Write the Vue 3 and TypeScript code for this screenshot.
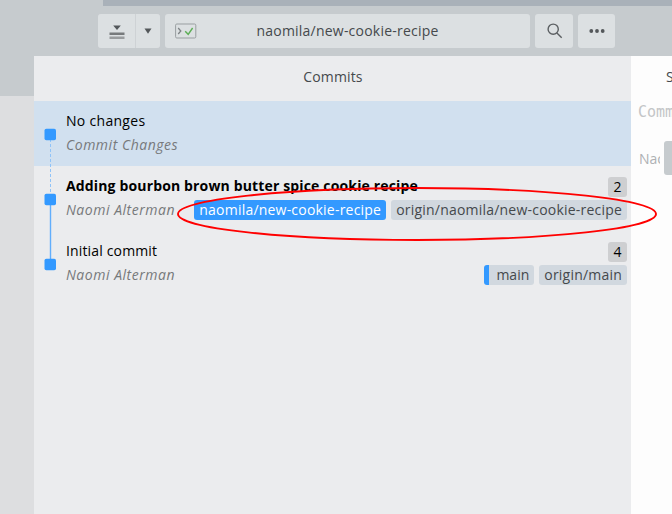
<script setup lang="ts">
interface RefLabel {
  name: string
  kind: 'current' | 'remote' | 'local'
}

interface Commit {
  title: string
  author: string
  selected?: boolean
  bold?: boolean
  files?: number
  refs: RefLabel[]
}

const branch = 'naomila/new-cookie-recipe'

const commits: Commit[] = [
  { title: 'No changes', author: 'Commit Changes', selected: true, refs: [] },
  {
    title: 'Adding bourbon brown butter spice cookie recipe',
    author: 'Naomi Alterman',
    bold: true,
    files: 2,
    refs: [
      { name: branch, kind: 'current' },
      { name: `origin/${branch}`, kind: 'remote' },
    ],
  },
  {
    title: 'Initial commit',
    author: 'Naomi Alterman',
    files: 4,
    refs: [
      { name: 'main', kind: 'local' },
      { name: 'origin/main', kind: 'remote' },
    ],
  },
]
</script>

<template>
  <div class="window">
    <header class="top">
      <div class="tab-strip"></div>
      <div class="toolbar">
        <div class="split">
          <button class="btn stash" aria-label="Stash">
            <svg width="16" height="16" viewBox="0 0 16 16">
              <path d="M4.2 1.5h7.6L8 6z" fill="#53575a" />
              <rect x="0.5" y="8.5" width="15" height="2.5" fill="#777a7c" />
              <rect x="0.5" y="12.5" width="15" height="2.5" fill="#999c9e" />
            </svg>
          </button>
          <button class="btn drop" aria-label="Stash options">
            <svg width="8" height="6" viewBox="0 0 8 6"><path d="M0.5 0.5h7L4 5.7z" fill="#53575a" /></svg>
          </button>
        </div>
        <button class="btn branch">
          <svg class="console" width="22" height="16" viewBox="0 0 22 16" fill="none">
            <rect x="0.6" y="1" width="20.2" height="14" rx="1.2" stroke="#999ea1" />
            <path d="M3.2 5l2.6 3-2.6 3" stroke="#7d8285" stroke-width="1.3" />
            <path d="M10.2 8.3l3 3L17.6 5" stroke="#5cae55" stroke-width="1.4" />
          </svg>
          <span class="branch-name">{{ branch }}</span>
        </button>
        <button class="btn search" aria-label="Search">
          <svg width="18" height="18" viewBox="0 0 18 18" fill="none" stroke="#5b5f62" stroke-width="1.4">
            <circle cx="7.2" cy="7.2" r="5.1" />
            <path d="M10.9 10.9l4.8 4.8" />
          </svg>
        </button>
        <button class="btn more" aria-label="More">
          <svg width="16" height="4" viewBox="0 0 16 4" fill="#53575a">
            <circle cx="2.3" cy="2" r="1.9" />
            <circle cx="8" cy="2" r="1.9" />
            <circle cx="13.7" cy="2" r="1.9" />
          </svg>
        </button>
      </div>
    </header>

    <div class="body">
      <aside class="rail"></aside>

      <main class="commits">
        <h2 class="heading"><span>Commits</span></h2>
        <div class="list">
          <svg class="graph" width="32" height="195" viewBox="0 0 32 195">
            <path d="M16.5 33v65" stroke="#8fc3f8" stroke-dasharray="3 2" />
            <path d="M16.5 98v65" stroke="#61aefc" stroke-width="1.4" />
            <rect
              v-for="(c, i) in commits"
              :key="c.title"
              x="10.5"
              :y="27.8 + i * 65"
              width="11.5"
              height="11.5"
              rx="1.8"
              fill="#3399ff"
            />
          </svg>
          <article v-for="c in commits" :key="c.title" class="row" :class="{ selected: c.selected }">
            <div class="line">
              <span class="title" :class="{ bold: c.bold }">{{ c.title }}</span>
              <span v-if="c.files" class="count">{{ c.files }}</span>
            </div>
            <div class="line second">
              <span class="author">{{ c.author }}</span>
              <span v-if="c.refs.length" class="refs">
                <span v-for="r in c.refs" :key="r.name" class="ref" :class="r.kind">{{ r.name }}</span>
              </span>
            </div>
          </article>
        </div>
      </main>

      <section class="details">
        <div class="tab">S</div>
        <div class="message">Comm</div>
        <div class="signoff">
          <span class="who">Nao</span>
          <span class="commit-btn"></span>
        </div>
      </section>
    </div>

    <svg class="marker" width="484" height="58" viewBox="0 0 484 58" fill="none">
      <ellipse cx="242" cy="29" rx="239" ry="26" stroke="#ff0000" stroke-width="1.9" />
    </svg>
  </div>
</template>

<style>
body {
  margin: 0;
  overflow: hidden;
}
</style>

<style scoped>
.window {
  position: relative;
  display: flex;
  flex-direction: column;
  width: 672px;
  height: 514px;
  overflow: hidden;
  background: #c6cbce;
  color: #000;
  font-family: 'Open Sans', 'Noto Sans', sans-serif;
  font-size: 14px;
}
.top {
  height: 56px;
  flex: none;
}
.tab-strip {
  height: 6px;
  margin-left: 103px;
  background: #a9b1b9;
}
.toolbar {
  display: flex;
  gap: 5px;
  padding: 8px 0 0 98px;
}
.split {
  display: flex;
  gap: 1px;
  border-radius: 3px;
  overflow: hidden;
  background: #ced2d5;
}
.btn {
  display: flex;
  align-items: center;
  justify-content: center;
  height: 34px;
  padding: 0;
  border: 0;
  border-radius: 3px;
  background: #dce0e2;
  color: #45494c;
  font: inherit;
}
.stash {
  width: 37px;
  border-radius: 0;
  padding-top: 1px;
}
.drop {
  width: 24px;
  border-radius: 0;
}
.branch {
  width: 365px;
  justify-content: flex-start;
}
.console {
  margin-left: 10px;
}
.branch-name {
  flex: 1;
  margin-right: 32px;
  padding-bottom: 1px;
  text-align: center;
  letter-spacing: 0.22px;
}
.search {
  width: 38px;
  padding-left: 2px;
}
.more {
  width: 37px;
  padding-bottom: 1px;
}
.body {
  display: flex;
  flex: 1;
}
.rail {
  width: 34px;
  margin-top: 40px;
  background: #dddee0;
}
.commits {
  width: 597px;
  background: #ebecee;
}
.heading {
  height: 45px;
  margin: 0;
  padding-left: 1px;
  line-height: 42px;
  text-align: center;
  letter-spacing: 0.15px;
  color: #45494c;
  font-size: 14px;
  font-weight: 400;
}
.list {
  position: relative;
}
.graph {
  position: absolute;
  top: 0;
  left: 0;
}
.row {
  box-sizing: border-box;
  height: 65px;
  padding: 8px 4px 0 32px;
}
.selected {
  background: #d1e0ef;
}
.line {
  display: flex;
  justify-content: space-between;
  height: 24px;
  line-height: 24px;
  white-space: nowrap;
}
.title {
  letter-spacing: 0.15px;
}
.selected .title {
  letter-spacing: 0.3px;
}
.bold {
  font-weight: 700;
}
.author {
  color: #77797b;
  font-style: italic;
  letter-spacing: 0.52px;
}
.refs {
  display: flex;
  gap: 5px;
  padding-top: 2px;
}
.ref {
  height: 20px;
  line-height: 20px;
  padding: 0 5px;
  border-radius: 3px;
  background: #d1d8df;
  color: #45494c;
  letter-spacing: 0.21px;
}
.ref.current {
  background: #3399ff;
  color: #fff;
}
.ref.local {
  padding-left: 7px;
  border-left: 5px solid #3399ff;
  letter-spacing: 0;
}
.count {
  width: 19px;
  height: 20px;
  margin-top: 3px;
  line-height: 19px;
  border-radius: 3px;
  background: #cecfd1;
  text-align: center;
}
.details {
  width: 41px;
  overflow: hidden;
  background: #fdfdfd;
  white-space: nowrap;
}
.tab {
  height: 42px;
  padding-left: 35px;
  line-height: 42px;
  color: #45494c;
}
.message {
  padding-left: 7px;
  height: 30px;
  line-height: 29px;
  color: #c3c5c7;
  font-family: 'DejaVu Sans Mono', monospace;
  font-size: 15px;
}
.signoff {
  display: flex;
  align-items: center;
  height: 34px;
  margin-top: 13px;
  padding-left: 8px;
  color: #aeb1b4;
}
.who {
  width: 21px;
  margin-right: 4px;
  flex: none;
  overflow: hidden;
}
.commit-btn {
  width: 30px;
  height: 34px;
  flex: none;
  border-radius: 3px;
  background: #c6cbce;
}
.marker {
  position: absolute;
  left: 175px;
  top: 185px;
}
</style>
